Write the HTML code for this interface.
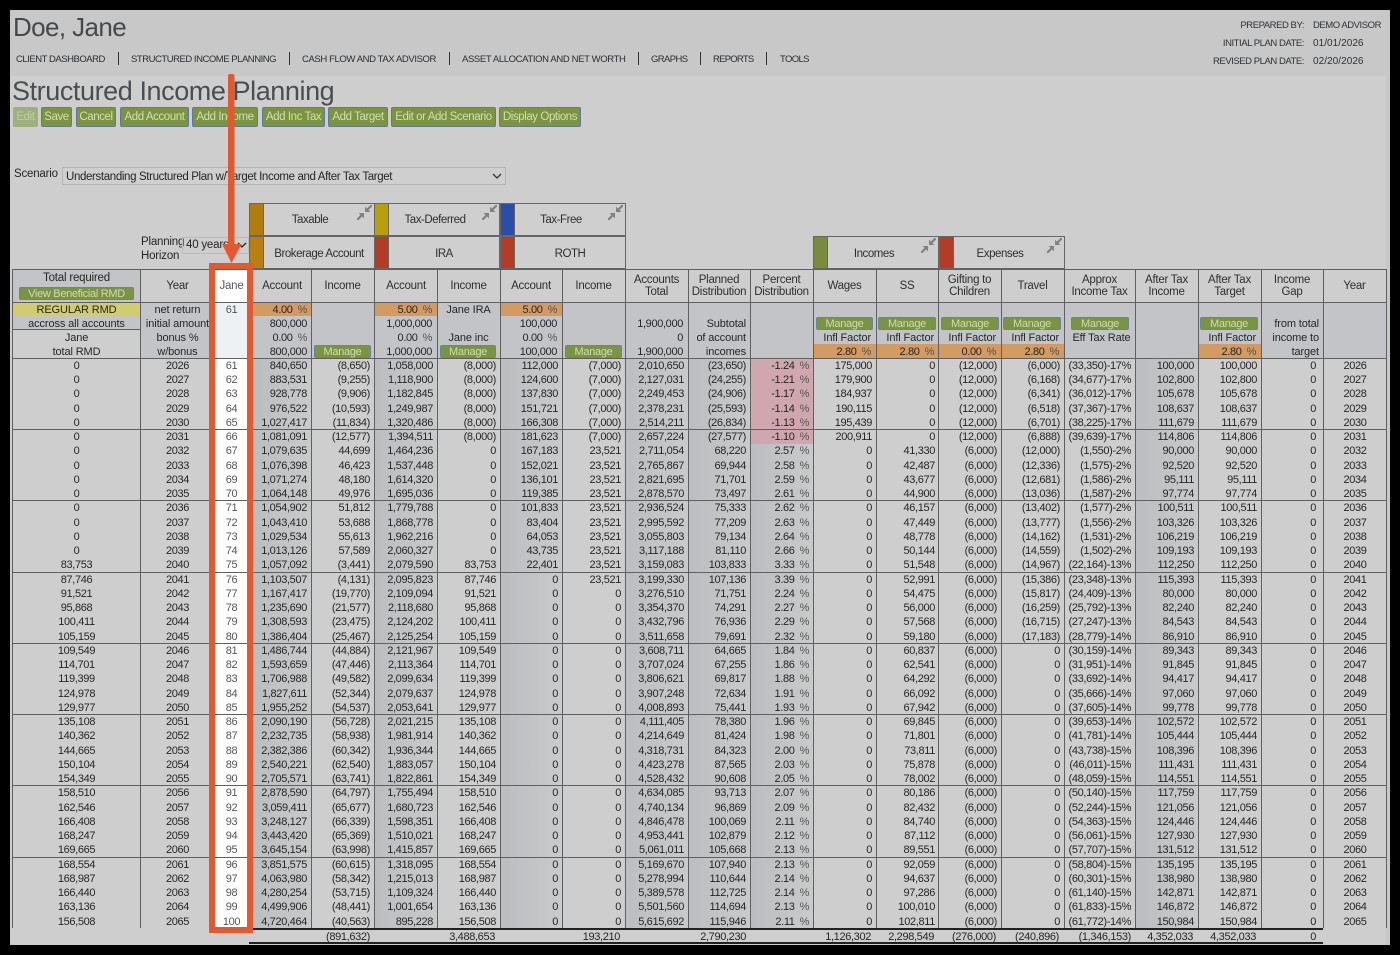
<!DOCTYPE html>
<html><head><meta charset="utf-8"><title>Structured Income Planning</title>
<style>
html,body{margin:0;padding:0;width:1400px;height:955px;overflow:hidden;background:#000}
body{position:relative;font-family:"Liberation Sans",Arial,sans-serif;color:#262626;font-size:11px;letter-spacing:-.35px;filter:blur(.25px)}
.a{position:absolute;white-space:nowrap}
.bg{position:absolute}
.nav{position:absolute;top:54px;font-size:9.5px;line-height:12px;letter-spacing:-.47px;color:#2a2f33;white-space:nowrap}
.sep{position:absolute;top:52px;width:1px;height:13px;background:#333}
.rt{position:absolute;font-size:9.5px;line-height:12px;letter-spacing:-.45px;color:#2e3236;white-space:nowrap}
.btn{position:absolute;top:107px;height:20px;box-sizing:border-box;background:#7a9440;border:1px solid #5f78a0;border-radius:2px;color:#d2dfb4;text-align:center;font-size:11.5px;line-height:18px;letter-spacing:-.42px;white-space:nowrap;overflow:hidden}
.mg{position:absolute;height:13px;box-sizing:border-box;background:#7b9444;border:1px solid #6a84a0;border-radius:2px;color:#cfdcb0;text-align:center;font-size:11px;line-height:12px;letter-spacing:-.3px}
.gh{position:absolute;height:33px;box-sizing:border-box;border:1px solid #666;background:#cfcfcf;line-height:34px;text-align:center;color:#2f2f2f;font-size:11.5px;letter-spacing:-.45px}
.gh.top{line-height:32px}
.gh b{position:absolute;left:0;top:0;bottom:0;width:13px;border-right:1px solid #666}
.gh span{position:absolute;left:14px;right:0;top:0}
.gh.ic span{right:16px;left:12px}
.gh svg{position:absolute;right:2px;top:1px}
.v{position:absolute;top:269px;height:659px;width:1px;background:#5e6062}
.h{position:absolute;height:1px;background:#5e6062}
.hd{position:absolute;top:270px;height:32px;text-align:center;font-size:11.5px;line-height:12.5px;letter-spacing:-.25px;color:#2f2f2f;display:flex;align-items:center;justify-content:center}
.sb{position:absolute;height:14px;line-height:14px;white-space:nowrap;margin-top:1px}
.sb em,.r em{font-style:normal;color:#555;margin-left:5px}
.l{letter-spacing:-.12px}
.c{text-align:center}.ri{text-align:right}
#rows{position:absolute;left:0;top:358.85px;width:1400px}
.r{position:relative;height:14.25px}
.r i{position:absolute;top:0;font-style:normal;line-height:14.25px;text-align:right;box-sizing:border-box;padding-right:4px;white-space:nowrap}
.r i:nth-child(1){left:13px;width:127px;text-align:center;padding:0}
.r i:nth-child(2){left:140px;width:75px;text-align:center;padding:0}
.r i:nth-child(3){left:213px;width:37px;text-align:center;padding:0;color:#555}
.r i:nth-child(4){left:253px;width:58px}
.r i:nth-child(5){left:311px;width:63px}
.r i:nth-child(6){left:374px;width:63px}
.r i:nth-child(7){left:437px;width:63px}
.r i:nth-child(8){left:500px;width:62px}
.r i:nth-child(9){left:562px;width:63px}
.r i:nth-child(10){left:625px;width:63px}
.r i:nth-child(11){left:688px;width:62px}
.r i:nth-child(12){left:750px;width:63px}
.r i:nth-child(13){left:813px;width:63px}
.r i:nth-child(14){left:876px;width:63px}
.r i:nth-child(15){left:939px;width:62px}
.r i:nth-child(16){left:1001px;width:63px}
.r i:nth-child(17){left:1064px;width:71px}
.r i:nth-child(18){left:1135px;width:63px}
.r i:nth-child(19){left:1198px;width:63px}
.r i:nth-child(20){left:1261px;width:62px;padding-right:7px}
.r i:nth-child(21){left:1323px;width:64px;text-align:center;padding:0}
.t{position:absolute;top:930px;height:14px;line-height:14px;text-align:right;white-space:nowrap}
.dk{position:absolute;top:358px;height:570px;background:linear-gradient(90deg,#bbbdc0,#c9cacb)}
</style></head><body>
<div class="bg" style="left:10px;top:10px;width:1380px;height:935px;background:#c8c8c8"></div>
<div class="bg" style="left:10px;top:76px;width:1376px;height:869px;background:#cecece"></div>

<div class="a" style="left:13px;top:12px;font-size:26px;line-height:30px;letter-spacing:-.6px;color:#45494c">Doe, Jane</div>
<div class="nav" style="left:16px">CLIENT DASHBOARD</div><div class="sep" style="left:118px"></div>
<div class="nav" style="left:131px">STRUCTURED INCOME PLANNING</div><div class="sep" style="left:289px"></div>
<div class="nav" style="left:302px;letter-spacing:-.39px">CASH FLOW AND TAX ADVISOR</div><div class="sep" style="left:449px"></div>
<div class="nav" style="left:462px;letter-spacing:-.37px">ASSET ALLOCATION AND NET WORTH</div><div class="sep" style="left:638px"></div>
<div class="nav" style="left:651px;letter-spacing:-.6px">GRAPHS</div><div class="sep" style="left:700px"></div>
<div class="nav" style="left:713px;letter-spacing:-.75px">REPORTS</div><div class="sep" style="left:766px"></div>
<div class="nav" style="left:780px;letter-spacing:-.65px">TOOLS</div>
<div class="rt ri" style="right:96px;top:20px">PREPARED BY:</div><div class="rt" style="left:1313px;top:20px">DEMO ADVISOR</div>
<div class="rt ri" style="right:96px;top:38px">INITIAL PLAN DATE:</div><div class="rt" style="left:1313px;top:38px;font-size:10px;letter-spacing:.05px">01/01/2026</div>
<div class="rt ri" style="right:96px;top:56px">REVISED PLAN DATE:</div><div class="rt" style="left:1313px;top:56px;font-size:10px;letter-spacing:.05px">02/20/2026</div>

<div class="a" style="left:12px;top:75px;font-size:27px;line-height:32px;letter-spacing:-.42px;color:#4a4e50">Structured Income Planning</div>

<div class="btn" style="left:13px;width:25px;background:#9db07d;border-color:#9db07d;color:#bfcda6">Edit</div>
<div class="btn" style="left:41px;width:31px">Save</div>
<div class="btn" style="left:76px;width:40px">Cancel</div>
<div class="btn" style="left:120px;width:69px">Add Account</div>
<div class="btn" style="left:192px;width:66px">Add Income</div>
<div class="btn" style="left:262px;width:63px">Add Inc Tax</div>
<div class="btn" style="left:328px;width:60px">Add Target</div>
<div class="btn" style="left:391px;width:105px">Edit or Add Scenario</div>
<div class="btn" style="left:499px;width:82px">Display Options</div>

<div class="a" style="left:14px;top:167px;font-size:11.5px;line-height:14px;letter-spacing:-.2px">Scenario</div>
<div class="a" style="left:62px;top:167px;width:444px;height:18px;box-sizing:border-box;border:1px solid #b4b4b4;background:#cfcfcf;font-size:11.5px;line-height:18px;padding-left:3px;letter-spacing:-.36px">Understanding Structured Plan w/Target Income and After Tax Target
<svg style="position:absolute;right:3px;top:5px" width="10" height="7"><path d="M1 1l4 4 4-4" fill="none" stroke="#333" stroke-width="1.3"/></svg></div>

<div class="a" style="left:141px;top:236px;font-size:11.5px;line-height:13.5px;letter-spacing:-.2px">Planning<br>Horizon</div>
<div class="a" style="left:182px;top:237px;width:67px;height:17px;box-sizing:border-box;border:1px solid #bcbcbc;font-size:11.5px;line-height:15px;padding-left:3px;letter-spacing:-.2px">40 years
<svg style="position:absolute;right:1px;top:4px" width="10" height="7"><path d="M1 1l4 4 4-4" fill="none" stroke="#222" stroke-width="1.3"/></svg></div>

<div class="gh top ic" style="left:249px;top:203px;width:126px"><b style="background:#b27c10"></b><span>Taxable</span><svg width="15" height="15" viewBox="0 0 14 14"><path d="M14 0L9 5M0 14L5 9" stroke="#808080" stroke-width="2"/><path d="M7.500 6.500V1.500L12.500 6.500zM6.500 7.500V12.500L1.500 7.500z" fill="#808080"/></svg></div>
<div class="gh top ic" style="left:374px;top:203px;width:126px"><b style="background:#b8a00c"></b><span>Tax-Deferred</span><svg width="15" height="15" viewBox="0 0 14 14"><path d="M14 0L9 5M0 14L5 9" stroke="#808080" stroke-width="2"/><path d="M7.500 6.500V1.500L12.500 6.500zM6.500 7.500V12.500L1.500 7.500z" fill="#808080"/></svg></div>
<div class="gh top ic" style="left:500px;top:203px;width:126px"><b style="background:#2a4ea8"></b><span>Tax-Free</span><svg width="15" height="15" viewBox="0 0 14 14"><path d="M14 0L9 5M0 14L5 9" stroke="#808080" stroke-width="2"/><path d="M7.500 6.500V1.500L12.500 6.500zM6.500 7.500V12.500L1.500 7.500z" fill="#808080"/></svg></div>
<div class="gh" style="left:249px;top:236px;width:126px"><b style="background:#b88010"></b><span>Brokerage Account</span></div>
<div class="gh" style="left:374px;top:236px;width:126px"><b style="background:#b23c24"></b><span>IRA</span></div>
<div class="gh" style="left:500px;top:236px;width:126px"><b style="background:#b23c24"></b><span>ROTH</span></div>
<div class="gh ic" style="left:813px;top:236px;width:126px"><b style="background:#7b8b3e"></b><span>Incomes</span><svg width="15" height="15" viewBox="0 0 14 14"><path d="M14 0L9 5M0 14L5 9" stroke="#808080" stroke-width="2"/><path d="M7.500 6.500V1.500L12.500 6.500zM6.500 7.500V12.500L1.500 7.500z" fill="#808080"/></svg></div>
<div class="gh ic" style="left:939px;top:236px;width:126px"><b style="background:#b23c24"></b><span>Expenses</span><svg width="15" height="15" viewBox="0 0 14 14"><path d="M14 0L9 5M0 14L5 9" stroke="#808080" stroke-width="2"/><path d="M7.500 6.500V1.500L12.500 6.500zM6.500 7.500V12.500L1.500 7.500z" fill="#808080"/></svg></div>

<!-- shading -->
<div class="bg" style="left:13px;top:269px;width:127px;height:33px;background:#c2c4c7"></div>
<div class="bg" style="left:13px;top:302px;width:127px;height:14px;background:#d0cd6e"></div>
<div class="bg" style="left:13px;top:316px;width:127px;height:14px;background:#c2c4c7"></div>
<div class="bg" style="left:140px;top:302px;width:1247px;height:56px;background:#c2c4c7"></div>
<div class="bg" style="left:253px;top:302px;width:58px;height:14px;background:#d39a62"></div>
<div class="bg" style="left:375px;top:302px;width:62px;height:14px;background:#d39a62"></div>
<div class="bg" style="left:500px;top:302px;width:62px;height:14px;background:#d39a62"></div>
<div class="bg" style="left:813px;top:344px;width:251px;height:14px;background:#d39a62"></div>
<div class="bg" style="left:1198px;top:344px;width:63px;height:14px;background:#d39a62"></div>
<div class="dk" style="left:253px;width:58px"></div>
<div class="dk" style="left:375px;width:62px"></div>
<div class="dk" style="left:500px;width:62px"></div>
<div class="dk" style="left:625px;width:63px"></div>
<div class="dk" style="left:688px;width:62px"></div>
<div class="dk" style="left:750px;width:63px"></div>
<div class="dk" style="left:1135px;width:63px"></div>
<div class="bg" style="left:751px;top:358px;width:62px;height:86px;background:#d0a7ae"></div>
<div class="bg" style="left:215px;top:269px;width:33px;height:658px;background:#fff"></div>
<div class="bg" style="left:215px;top:302px;width:33px;height:56px;background:#eef1f3"></div>

<!-- lines -->
<div class="h" style="left:12px;top:269px;width:1375px"></div>
<div class="h" style="left:12px;top:302px;width:1375px"></div>
<div class="h" style="left:12px;top:329px;width:128px"></div>
<div class="h" style="left:12px;top:358px;width:1375px"></div>
<div class="h" style="left:12px;top:429px;width:1375px"></div>
<div class="h" style="left:12px;top:500px;width:1375px"></div>
<div class="h" style="left:12px;top:572px;width:1375px"></div>
<div class="h" style="left:12px;top:643px;width:1375px"></div>
<div class="h" style="left:12px;top:714px;width:1375px"></div>
<div class="h" style="left:12px;top:785px;width:1375px"></div>
<div class="h" style="left:12px;top:857px;width:1375px"></div>
<div class="v" style="left:12px"></div><div class="v" style="left:140px"></div>
<div class="v" style="left:311px"></div><div class="v" style="left:374px"></div><div class="v" style="left:437px"></div><div class="v" style="left:500px"></div><div class="v" style="left:562px"></div><div class="v" style="left:625px"></div><div class="v" style="left:688px"></div><div class="v" style="left:750px"></div><div class="v" style="left:813px"></div><div class="v" style="left:876px"></div><div class="v" style="left:938px"></div><div class="v" style="left:1001px"></div><div class="v" style="left:1064px"></div><div class="v" style="left:1135px"></div><div class="v" style="left:1198px"></div><div class="v" style="left:1261px"></div><div class="v" style="left:1323px"></div><div class="v" style="left:1386px"></div>

<!-- header row -->
<div class="a c" style="left:13px;top:271px;width:127px;font-size:11.5px;line-height:14px;letter-spacing:-.2px">Total required</div>
<div class="mg" style="left:19px;top:287px;width:115px">View Beneficial RMD</div>
<div class="hd" style="left:140px;width:75px">Year</div>
<div class="hd" style="left:213px;width:37px;color:#555">Jane</div>
<div class="hd" style="left:253px;width:58px">Account</div>
<div class="hd" style="left:311px;width:63px">Income</div>
<div class="hd" style="left:375px;width:62px">Account</div>
<div class="hd" style="left:437px;width:63px">Income</div>
<div class="hd" style="left:500px;width:62px">Account</div>
<div class="hd" style="left:562px;width:63px">Income</div>
<div class="hd" style="left:625px;width:63px">Accounts<br>Total</div>
<div class="hd" style="left:688px;width:62px">Planned<br>Distribution</div>
<div class="hd" style="left:750px;width:63px">Percent<br>Distribution</div>
<div class="hd" style="left:813px;width:63px">Wages</div>
<div class="hd" style="left:876px;width:62px">SS</div>
<div class="hd" style="left:938px;width:63px">Gifting to<br>Children</div>
<div class="hd" style="left:1001px;width:63px">Travel</div>
<div class="hd" style="left:1064px;width:71px">Approx<br>Income Tax</div>
<div class="hd" style="left:1135px;width:63px">After Tax<br>Income</div>
<div class="hd" style="left:1198px;width:63px">After Tax<br>Target</div>
<div class="hd" style="left:1261px;width:62px">Income<br>Gap</div>
<div class="hd" style="left:1323px;width:63px">Year</div>

<!-- sub header -->
<div class="sb c l" style="left:13px;top:302px;width:127px">REGULAR RMD</div>
<div class="sb c l" style="left:13px;top:316px;width:127px">accross all accounts</div>
<div class="sb c l" style="left:13px;top:330px;width:127px">Jane</div>
<div class="sb c l" style="left:13px;top:344px;width:127px">total RMD</div>
<div class="sb c l" style="left:140px;top:302px;width:75px">net return</div>
<div class="sb c l" style="left:140px;top:316px;width:75px">initial amount</div>
<div class="sb c l" style="left:140px;top:330px;width:75px">bonus %</div>
<div class="sb c l" style="left:140px;top:344px;width:75px">w/bonus</div>
<div class="sb c" style="left:213px;top:302px;width:37px;color:#555">61</div>

<div class="sb ri" style="right:1093px;top:302px">4.00<em>%</em></div>
<div class="sb ri" style="right:1093px;top:316px">800,000</div>
<div class="sb ri" style="right:1093px;top:330px">0.00<em>%</em></div>
<div class="sb ri" style="right:1093px;top:344px">800,000</div>
<div class="mg" style="left:314px;top:345px;width:57px">Manage</div>

<div class="sb ri" style="right:968px;top:302px">5.00<em>%</em></div>
<div class="sb ri" style="right:968px;top:316px">1,000,000</div>
<div class="sb ri" style="right:968px;top:330px">0.00<em>%</em></div>
<div class="sb ri" style="right:968px;top:344px">1,000,000</div>
<div class="sb c l" style="left:437px;top:302px;width:63px">Jane IRA</div>
<div class="sb c l" style="left:437px;top:330px;width:63px">Jane inc</div>
<div class="mg" style="left:440px;top:345px;width:56px">Manage</div>

<div class="sb ri" style="right:843px;top:302px">5.00<em>%</em></div>
<div class="sb ri" style="right:843px;top:316px">100,000</div>
<div class="sb ri" style="right:843px;top:330px">0.00<em>%</em></div>
<div class="sb ri" style="right:843px;top:344px">100,000</div>
<div class="mg" style="left:565px;top:345px;width:57px">Manage</div>

<div class="sb ri" style="right:717px;top:316px">1,900,000</div>
<div class="sb ri" style="right:717px;top:330px">0</div>
<div class="sb ri" style="right:717px;top:344px">1,900,000</div>
<div class="sb ri l" style="right:654px;top:316px">Subtotal</div>
<div class="sb ri l" style="right:654px;top:330px">of account</div>
<div class="sb ri l" style="right:654px;top:344px">incomes</div>

<div class="mg" style="left:816px;top:317px;width:57px">Manage</div>
<div class="sb ri l" style="right:529px;top:330px">Infl Factor</div>
<div class="sb ri" style="right:529px;top:344px">2.80<em>%</em></div>
<div class="mg" style="left:878px;top:317px;width:58px">Manage</div>
<div class="sb ri l" style="right:466px;top:330px">Infl Factor</div>
<div class="sb ri" style="right:466px;top:344px">2.80<em>%</em></div>
<div class="mg" style="left:941px;top:317px;width:58px">Manage</div>
<div class="sb ri l" style="right:404px;top:330px">Infl Factor</div>
<div class="sb ri" style="right:404px;top:344px">0.00<em>%</em></div>
<div class="mg" style="left:1003px;top:317px;width:58px">Manage</div>
<div class="sb ri l" style="right:341px;top:330px">Infl Factor</div>
<div class="sb ri" style="right:341px;top:344px">2.80<em>%</em></div>
<div class="mg" style="left:1071px;top:317px;width:58px">Manage</div>
<div class="sb c l" style="left:1064px;top:330px;width:75px">Eff Tax Rate</div>
<div class="mg" style="left:1200px;top:317px;width:58px">Manage</div>
<div class="sb ri l" style="right:144px;top:330px">Infl Factor</div>
<div class="sb ri" style="right:144px;top:344px">2.80<em>%</em></div>
<div class="sb ri l" style="right:81px;top:316px">from total</div>
<div class="sb ri l" style="right:81px;top:330px">income to</div>
<div class="sb ri l" style="right:81px;top:344px">target</div>

<div id="rows">
<div class="r"><i>0</i><i>2026</i><i>61</i><i>840,650</i><i>(8,650)</i><i>1,058,000</i><i>(8,000)</i><i>112,000</i><i>(7,000)</i><i>2,010,650</i><i>(23,650)</i><i>-1.24<em>%</em></i><i>175,000</i><i>0</i><i>(12,000)</i><i>(6,000)</i><i>(33,350)-17%</i><i>100,000</i><i>100,000</i><i>0</i><i>2026</i></div>
<div class="r"><i>0</i><i>2027</i><i>62</i><i>883,531</i><i>(9,255)</i><i>1,118,900</i><i>(8,000)</i><i>124,600</i><i>(7,000)</i><i>2,127,031</i><i>(24,255)</i><i>-1.21<em>%</em></i><i>179,900</i><i>0</i><i>(12,000)</i><i>(6,168)</i><i>(34,677)-17%</i><i>102,800</i><i>102,800</i><i>0</i><i>2027</i></div>
<div class="r"><i>0</i><i>2028</i><i>63</i><i>928,778</i><i>(9,906)</i><i>1,182,845</i><i>(8,000)</i><i>137,830</i><i>(7,000)</i><i>2,249,453</i><i>(24,906)</i><i>-1.17<em>%</em></i><i>184,937</i><i>0</i><i>(12,000)</i><i>(6,341)</i><i>(36,012)-17%</i><i>105,678</i><i>105,678</i><i>0</i><i>2028</i></div>
<div class="r"><i>0</i><i>2029</i><i>64</i><i>976,522</i><i>(10,593)</i><i>1,249,987</i><i>(8,000)</i><i>151,721</i><i>(7,000)</i><i>2,378,231</i><i>(25,593)</i><i>-1.14<em>%</em></i><i>190,115</i><i>0</i><i>(12,000)</i><i>(6,518)</i><i>(37,367)-17%</i><i>108,637</i><i>108,637</i><i>0</i><i>2029</i></div>
<div class="r"><i>0</i><i>2030</i><i>65</i><i>1,027,417</i><i>(11,834)</i><i>1,320,486</i><i>(8,000)</i><i>166,308</i><i>(7,000)</i><i>2,514,211</i><i>(26,834)</i><i>-1.13<em>%</em></i><i>195,439</i><i>0</i><i>(12,000)</i><i>(6,701)</i><i>(38,225)-17%</i><i>111,679</i><i>111,679</i><i>0</i><i>2030</i></div>
<div class="r"><i>0</i><i>2031</i><i>66</i><i>1,081,091</i><i>(12,577)</i><i>1,394,511</i><i>(8,000)</i><i>181,623</i><i>(7,000)</i><i>2,657,224</i><i>(27,577)</i><i>-1.10<em>%</em></i><i>200,911</i><i>0</i><i>(12,000)</i><i>(6,888)</i><i>(39,639)-17%</i><i>114,806</i><i>114,806</i><i>0</i><i>2031</i></div>
<div class="r"><i>0</i><i>2032</i><i>67</i><i>1,079,635</i><i>44,699</i><i>1,464,236</i><i>0</i><i>167,183</i><i>23,521</i><i>2,711,054</i><i>68,220</i><i>2.57<em>%</em></i><i>0</i><i>41,330</i><i>(6,000)</i><i>(12,000)</i><i>(1,550)-2%</i><i>90,000</i><i>90,000</i><i>0</i><i>2032</i></div>
<div class="r"><i>0</i><i>2033</i><i>68</i><i>1,076,398</i><i>46,423</i><i>1,537,448</i><i>0</i><i>152,021</i><i>23,521</i><i>2,765,867</i><i>69,944</i><i>2.58<em>%</em></i><i>0</i><i>42,487</i><i>(6,000)</i><i>(12,336)</i><i>(1,575)-2%</i><i>92,520</i><i>92,520</i><i>0</i><i>2033</i></div>
<div class="r"><i>0</i><i>2034</i><i>69</i><i>1,071,274</i><i>48,180</i><i>1,614,320</i><i>0</i><i>136,101</i><i>23,521</i><i>2,821,695</i><i>71,701</i><i>2.59<em>%</em></i><i>0</i><i>43,677</i><i>(6,000)</i><i>(12,681)</i><i>(1,586)-2%</i><i>95,111</i><i>95,111</i><i>0</i><i>2034</i></div>
<div class="r"><i>0</i><i>2035</i><i>70</i><i>1,064,148</i><i>49,976</i><i>1,695,036</i><i>0</i><i>119,385</i><i>23,521</i><i>2,878,570</i><i>73,497</i><i>2.61<em>%</em></i><i>0</i><i>44,900</i><i>(6,000)</i><i>(13,036)</i><i>(1,587)-2%</i><i>97,774</i><i>97,774</i><i>0</i><i>2035</i></div>
<div class="r"><i>0</i><i>2036</i><i>71</i><i>1,054,902</i><i>51,812</i><i>1,779,788</i><i>0</i><i>101,833</i><i>23,521</i><i>2,936,524</i><i>75,333</i><i>2.62<em>%</em></i><i>0</i><i>46,157</i><i>(6,000)</i><i>(13,402)</i><i>(1,577)-2%</i><i>100,511</i><i>100,511</i><i>0</i><i>2036</i></div>
<div class="r"><i>0</i><i>2037</i><i>72</i><i>1,043,410</i><i>53,688</i><i>1,868,778</i><i>0</i><i>83,404</i><i>23,521</i><i>2,995,592</i><i>77,209</i><i>2.63<em>%</em></i><i>0</i><i>47,449</i><i>(6,000)</i><i>(13,777)</i><i>(1,556)-2%</i><i>103,326</i><i>103,326</i><i>0</i><i>2037</i></div>
<div class="r"><i>0</i><i>2038</i><i>73</i><i>1,029,534</i><i>55,613</i><i>1,962,216</i><i>0</i><i>64,053</i><i>23,521</i><i>3,055,803</i><i>79,134</i><i>2.64<em>%</em></i><i>0</i><i>48,778</i><i>(6,000)</i><i>(14,162)</i><i>(1,531)-2%</i><i>106,219</i><i>106,219</i><i>0</i><i>2038</i></div>
<div class="r"><i>0</i><i>2039</i><i>74</i><i>1,013,126</i><i>57,589</i><i>2,060,327</i><i>0</i><i>43,735</i><i>23,521</i><i>3,117,188</i><i>81,110</i><i>2.66<em>%</em></i><i>0</i><i>50,144</i><i>(6,000)</i><i>(14,559)</i><i>(1,502)-2%</i><i>109,193</i><i>109,193</i><i>0</i><i>2039</i></div>
<div class="r"><i>83,753</i><i>2040</i><i>75</i><i>1,057,092</i><i>(3,441)</i><i>2,079,590</i><i>83,753</i><i>22,401</i><i>23,521</i><i>3,159,083</i><i>103,833</i><i>3.33<em>%</em></i><i>0</i><i>51,548</i><i>(6,000)</i><i>(14,967)</i><i>(22,164)-13%</i><i>112,250</i><i>112,250</i><i>0</i><i>2040</i></div>
<div class="r"><i>87,746</i><i>2041</i><i>76</i><i>1,103,507</i><i>(4,131)</i><i>2,095,823</i><i>87,746</i><i>0</i><i>23,521</i><i>3,199,330</i><i>107,136</i><i>3.39<em>%</em></i><i>0</i><i>52,991</i><i>(6,000)</i><i>(15,386)</i><i>(23,348)-13%</i><i>115,393</i><i>115,393</i><i>0</i><i>2041</i></div>
<div class="r"><i>91,521</i><i>2042</i><i>77</i><i>1,167,417</i><i>(19,770)</i><i>2,109,094</i><i>91,521</i><i>0</i><i>0</i><i>3,276,510</i><i>71,751</i><i>2.24<em>%</em></i><i>0</i><i>54,475</i><i>(6,000)</i><i>(15,817)</i><i>(24,409)-13%</i><i>80,000</i><i>80,000</i><i>0</i><i>2042</i></div>
<div class="r"><i>95,868</i><i>2043</i><i>78</i><i>1,235,690</i><i>(21,577)</i><i>2,118,680</i><i>95,868</i><i>0</i><i>0</i><i>3,354,370</i><i>74,291</i><i>2.27<em>%</em></i><i>0</i><i>56,000</i><i>(6,000)</i><i>(16,259)</i><i>(25,792)-13%</i><i>82,240</i><i>82,240</i><i>0</i><i>2043</i></div>
<div class="r"><i>100,411</i><i>2044</i><i>79</i><i>1,308,593</i><i>(23,475)</i><i>2,124,202</i><i>100,411</i><i>0</i><i>0</i><i>3,432,796</i><i>76,936</i><i>2.29<em>%</em></i><i>0</i><i>57,568</i><i>(6,000)</i><i>(16,715)</i><i>(27,247)-13%</i><i>84,543</i><i>84,543</i><i>0</i><i>2044</i></div>
<div class="r"><i>105,159</i><i>2045</i><i>80</i><i>1,386,404</i><i>(25,467)</i><i>2,125,254</i><i>105,159</i><i>0</i><i>0</i><i>3,511,658</i><i>79,691</i><i>2.32<em>%</em></i><i>0</i><i>59,180</i><i>(6,000)</i><i>(17,183)</i><i>(28,779)-14%</i><i>86,910</i><i>86,910</i><i>0</i><i>2045</i></div>
<div class="r"><i>109,549</i><i>2046</i><i>81</i><i>1,486,744</i><i>(44,884)</i><i>2,121,967</i><i>109,549</i><i>0</i><i>0</i><i>3,608,711</i><i>64,665</i><i>1.84<em>%</em></i><i>0</i><i>60,837</i><i>(6,000)</i><i>0</i><i>(30,159)-14%</i><i>89,343</i><i>89,343</i><i>0</i><i>2046</i></div>
<div class="r"><i>114,701</i><i>2047</i><i>82</i><i>1,593,659</i><i>(47,446)</i><i>2,113,364</i><i>114,701</i><i>0</i><i>0</i><i>3,707,024</i><i>67,255</i><i>1.86<em>%</em></i><i>0</i><i>62,541</i><i>(6,000)</i><i>0</i><i>(31,951)-14%</i><i>91,845</i><i>91,845</i><i>0</i><i>2047</i></div>
<div class="r"><i>119,399</i><i>2048</i><i>83</i><i>1,706,988</i><i>(49,582)</i><i>2,099,634</i><i>119,399</i><i>0</i><i>0</i><i>3,806,621</i><i>69,817</i><i>1.88<em>%</em></i><i>0</i><i>64,292</i><i>(6,000)</i><i>0</i><i>(33,692)-14%</i><i>94,417</i><i>94,417</i><i>0</i><i>2048</i></div>
<div class="r"><i>124,978</i><i>2049</i><i>84</i><i>1,827,611</i><i>(52,344)</i><i>2,079,637</i><i>124,978</i><i>0</i><i>0</i><i>3,907,248</i><i>72,634</i><i>1.91<em>%</em></i><i>0</i><i>66,092</i><i>(6,000)</i><i>0</i><i>(35,666)-14%</i><i>97,060</i><i>97,060</i><i>0</i><i>2049</i></div>
<div class="r"><i>129,977</i><i>2050</i><i>85</i><i>1,955,252</i><i>(54,537)</i><i>2,053,641</i><i>129,977</i><i>0</i><i>0</i><i>4,008,893</i><i>75,441</i><i>1.93<em>%</em></i><i>0</i><i>67,942</i><i>(6,000)</i><i>0</i><i>(37,605)-14%</i><i>99,778</i><i>99,778</i><i>0</i><i>2050</i></div>
<div class="r"><i>135,108</i><i>2051</i><i>86</i><i>2,090,190</i><i>(56,728)</i><i>2,021,215</i><i>135,108</i><i>0</i><i>0</i><i>4,111,405</i><i>78,380</i><i>1.96<em>%</em></i><i>0</i><i>69,845</i><i>(6,000)</i><i>0</i><i>(39,653)-14%</i><i>102,572</i><i>102,572</i><i>0</i><i>2051</i></div>
<div class="r"><i>140,362</i><i>2052</i><i>87</i><i>2,232,735</i><i>(58,938)</i><i>1,981,914</i><i>140,362</i><i>0</i><i>0</i><i>4,214,649</i><i>81,424</i><i>1.98<em>%</em></i><i>0</i><i>71,801</i><i>(6,000)</i><i>0</i><i>(41,781)-14%</i><i>105,444</i><i>105,444</i><i>0</i><i>2052</i></div>
<div class="r"><i>144,665</i><i>2053</i><i>88</i><i>2,382,386</i><i>(60,342)</i><i>1,936,344</i><i>144,665</i><i>0</i><i>0</i><i>4,318,731</i><i>84,323</i><i>2.00<em>%</em></i><i>0</i><i>73,811</i><i>(6,000)</i><i>0</i><i>(43,738)-15%</i><i>108,396</i><i>108,396</i><i>0</i><i>2053</i></div>
<div class="r"><i>150,104</i><i>2054</i><i>89</i><i>2,540,221</i><i>(62,540)</i><i>1,883,057</i><i>150,104</i><i>0</i><i>0</i><i>4,423,278</i><i>87,565</i><i>2.03<em>%</em></i><i>0</i><i>75,878</i><i>(6,000)</i><i>0</i><i>(46,011)-15%</i><i>111,431</i><i>111,431</i><i>0</i><i>2054</i></div>
<div class="r"><i>154,349</i><i>2055</i><i>90</i><i>2,705,571</i><i>(63,741)</i><i>1,822,861</i><i>154,349</i><i>0</i><i>0</i><i>4,528,432</i><i>90,608</i><i>2.05<em>%</em></i><i>0</i><i>78,002</i><i>(6,000)</i><i>0</i><i>(48,059)-15%</i><i>114,551</i><i>114,551</i><i>0</i><i>2055</i></div>
<div class="r"><i>158,510</i><i>2056</i><i>91</i><i>2,878,590</i><i>(64,797)</i><i>1,755,494</i><i>158,510</i><i>0</i><i>0</i><i>4,634,085</i><i>93,713</i><i>2.07<em>%</em></i><i>0</i><i>80,186</i><i>(6,000)</i><i>0</i><i>(50,140)-15%</i><i>117,759</i><i>117,759</i><i>0</i><i>2056</i></div>
<div class="r"><i>162,546</i><i>2057</i><i>92</i><i>3,059,411</i><i>(65,677)</i><i>1,680,723</i><i>162,546</i><i>0</i><i>0</i><i>4,740,134</i><i>96,869</i><i>2.09<em>%</em></i><i>0</i><i>82,432</i><i>(6,000)</i><i>0</i><i>(52,244)-15%</i><i>121,056</i><i>121,056</i><i>0</i><i>2057</i></div>
<div class="r"><i>166,408</i><i>2058</i><i>93</i><i>3,248,127</i><i>(66,339)</i><i>1,598,351</i><i>166,408</i><i>0</i><i>0</i><i>4,846,478</i><i>100,069</i><i>2.11<em>%</em></i><i>0</i><i>84,740</i><i>(6,000)</i><i>0</i><i>(54,363)-15%</i><i>124,446</i><i>124,446</i><i>0</i><i>2058</i></div>
<div class="r"><i>168,247</i><i>2059</i><i>94</i><i>3,443,420</i><i>(65,369)</i><i>1,510,021</i><i>168,247</i><i>0</i><i>0</i><i>4,953,441</i><i>102,879</i><i>2.12<em>%</em></i><i>0</i><i>87,112</i><i>(6,000)</i><i>0</i><i>(56,061)-15%</i><i>127,930</i><i>127,930</i><i>0</i><i>2059</i></div>
<div class="r"><i>169,665</i><i>2060</i><i>95</i><i>3,645,154</i><i>(63,998)</i><i>1,415,857</i><i>169,665</i><i>0</i><i>0</i><i>5,061,011</i><i>105,668</i><i>2.13<em>%</em></i><i>0</i><i>89,551</i><i>(6,000)</i><i>0</i><i>(57,707)-15%</i><i>131,512</i><i>131,512</i><i>0</i><i>2060</i></div>
<div class="r"><i>168,554</i><i>2061</i><i>96</i><i>3,851,575</i><i>(60,615)</i><i>1,318,095</i><i>168,554</i><i>0</i><i>0</i><i>5,169,670</i><i>107,940</i><i>2.13<em>%</em></i><i>0</i><i>92,059</i><i>(6,000)</i><i>0</i><i>(58,804)-15%</i><i>135,195</i><i>135,195</i><i>0</i><i>2061</i></div>
<div class="r"><i>168,987</i><i>2062</i><i>97</i><i>4,063,980</i><i>(58,342)</i><i>1,215,013</i><i>168,987</i><i>0</i><i>0</i><i>5,278,994</i><i>110,644</i><i>2.14<em>%</em></i><i>0</i><i>94,637</i><i>(6,000)</i><i>0</i><i>(60,301)-15%</i><i>138,980</i><i>138,980</i><i>0</i><i>2062</i></div>
<div class="r"><i>166,440</i><i>2063</i><i>98</i><i>4,280,254</i><i>(53,715)</i><i>1,109,324</i><i>166,440</i><i>0</i><i>0</i><i>5,389,578</i><i>112,725</i><i>2.14<em>%</em></i><i>0</i><i>97,286</i><i>(6,000)</i><i>0</i><i>(61,140)-15%</i><i>142,871</i><i>142,871</i><i>0</i><i>2063</i></div>
<div class="r"><i>163,136</i><i>2064</i><i>99</i><i>4,499,906</i><i>(48,441)</i><i>1,001,654</i><i>163,136</i><i>0</i><i>0</i><i>5,501,560</i><i>114,694</i><i>2.13<em>%</em></i><i>0</i><i>100,010</i><i>(6,000)</i><i>0</i><i>(61,833)-15%</i><i>146,872</i><i>146,872</i><i>0</i><i>2064</i></div>
<div class="r"><i>156,508</i><i>2065</i><i>100</i><i>4,720,464</i><i>(40,563)</i><i>895,228</i><i>156,508</i><i>0</i><i>0</i><i>5,615,692</i><i>115,946</i><i>2.11<em>%</em></i><i>0</i><i>102,811</i><i>(6,000)</i><i>0</i><i>(61,772)-14%</i><i>150,984</i><i>150,984</i><i>0</i><i>2065</i></div>
</div>

<!-- totals -->
<div class="bg" style="left:249px;top:928px;width:1074px;height:1.5px;background:#222"></div>
<div class="bg" style="left:249px;top:942px;width:1074px;height:2px;background:#222"></div>
<div class="t" style="right:1030px">(891,632)</div>
<div class="t" style="right:905px">3,488,653</div>
<div class="t" style="right:780px">193,210</div>
<div class="t" style="right:654px">2,790,230</div>
<div class="t" style="right:529px">1,126,302</div>
<div class="t" style="right:466px">2,298,549</div>
<div class="t" style="right:404px">(276,000)</div>
<div class="t" style="right:341px">(240,896)</div>
<div class="t" style="right:269px">(1,346,153)</div>
<div class="t" style="right:207px">4,352,033</div>
<div class="t" style="right:144px">4,352,033</div>
<div class="t" style="right:84px">0</div>

<!-- annotation -->
<div class="bg" style="left:209px;top:263px;width:44px;height:670px;box-sizing:border-box;border:6px solid #e2592f"></div>
<svg class="bg" style="left:215px;top:70px" width="34" height="198" viewBox="0 0 34 198"><rect x="13" y="4" width="6.500" height="172" rx="2" fill="#e2592f"/><path d="M7 174H26.500L16.500 193z" fill="#e2592f"/></svg>
</body></html>
